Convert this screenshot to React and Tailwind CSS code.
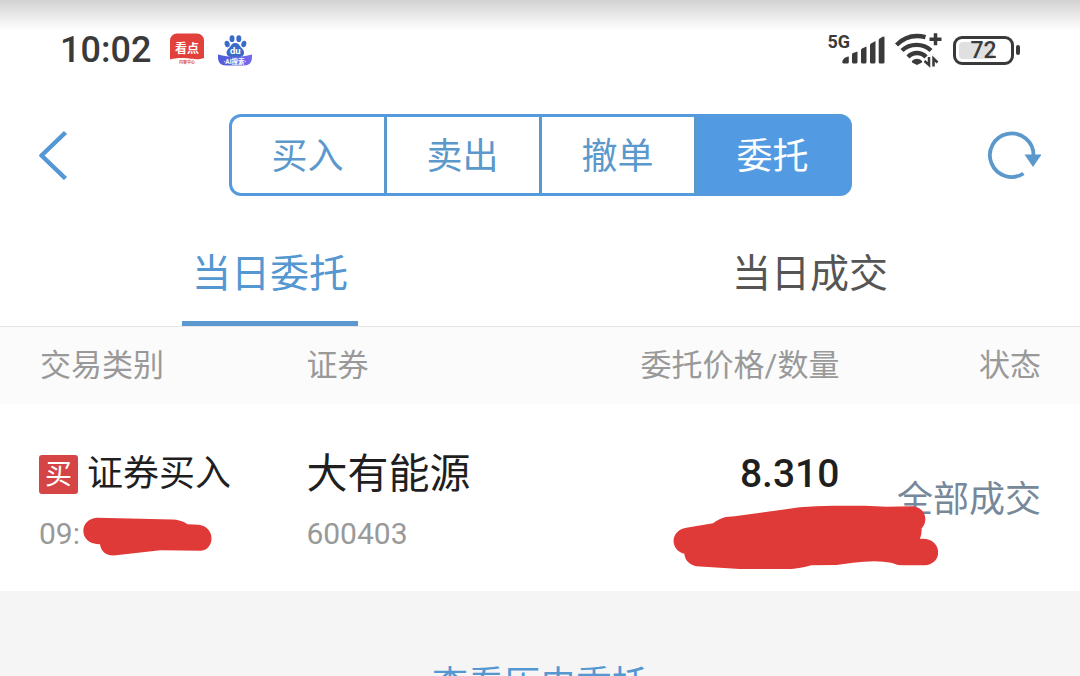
import React from "react";

function NewsBadge() {
  return (
    <svg className="h-[34px] w-[34px]" viewBox="0 0 34 34" role="img" aria-label="看点">
      <path d="M7 .5h20a7 7 0 0 1 7 7V25c-6 2.200-11 1-17 .3S5 25 0 26.500V7.500a7 7 0 0 1 7-7z" fill="#e2403a" />
      <text x="17" y="20" textAnchor="middle" fontSize="12" fontWeight="700" fill="#fff">看点</text>
      <text x="17" y="31" textAnchor="middle" fontSize="4" fontWeight="700" fill="#d9534f">内容中心</text>
    </svg>
  );
}

function PawBadge() {
  return (
    <svg className="h-[34px] w-[34px]" viewBox="0 0 34 34" role="img" aria-label="AI搜索">
      <defs>
        <linearGradient id="paw-band" x1="0" x2="1">
          <stop offset="0" stopColor="#4f5bd8" />
          <stop offset="1" stopColor="#7668ee" />
        </linearGradient>
      </defs>
      <g fill="#3a6bc9">
        <ellipse cx="9.200" cy="11" rx="2.500" ry="3.300" transform="rotate(-15 9.200 11)" />
        <ellipse cx="14" cy="5.700" rx="2.500" ry="3.400" />
        <ellipse cx="20.800" cy="5.700" rx="2.500" ry="3.400" />
        <ellipse cx="25.800" cy="11" rx="2.500" ry="3.300" transform="rotate(15 25.800 11)" />
        <path d="M17.300 10c3 0 4 2.200 5.600 4.200 2 2.200 3.600 3.500 3.100 6.200-.5 3-3 3.800-8.700 3.800s-8.200-.8-8.700-3.800c-.5-2.700 1.100-4 3.100-6.200 1.600-2 2.600-4.200 5.600-4.200z" />
      </g>
      <text x="17.300" y="21" textAnchor="middle" fontSize="9.500" fontWeight="700" fill="#fff">du</text>
      <path d="M0 21.500c6 1.800 11 2.200 17 2.200s11-.4 17-2.200v3c0 5-3 8-8 8H8c-5 0-8-3-8-8z" fill="url(#paw-band)" />
      <text x="17" y="30.500" textAnchor="middle" fontSize="6.500" fontWeight="700" fill="#fff">·AI搜索·</text>
    </svg>
  );
}

function Signal() {
  return (
    <div className="flex h-[36px] items-start" role="img" aria-label="5G">
      <span className="text-[18px] leading-[20px] font-bold text-[#3a3a3a]">5G</span>
      <svg className="-ml-2 h-[36px] w-[43px]" viewBox="15 0 43 36" fill="#3a3a3a">
        <path d="M15.300 30.500c0-3 2.500-5.500 6.500-6V30q0 1.500-1.500 1.500h-3.500q-1.500 0-1.500-1z" />
        <path d="M25 22.500q0-1 1-1.400l4.500-1.600V30q0 1.500-1.500 1.500h-2.500Q25 31.500 25 30z" />
        <path d="M34 18q0-1 1-1.500l4.500-2V30q0 1.500-1.500 1.500h-2.500Q34 31.500 34 30z" />
        <path d="M43 13q0-1 1-1.500l4.500-2.500v21q0 1.500-1.500 1.500h-2.500Q43 31.500 43 30z" />
        <path d="M51.700 8q0-1 1-1.600l3-1.700q1.800-.7 1.800 1.300v24q0 1.500-1.500 1.500h-2.800q-1.500 0-1.500-1.500z" />
      </svg>
    </div>
  );
}

function Wifi() {
  return (
    <svg className="h-[36px] w-[48px]" viewBox="0 0 48 36" role="img" aria-label="Wi-Fi">
      <g fill="none" stroke="#3a3a3a" strokeWidth="4.400">
        <path d="M1.500 13C10 4.500 20 2.500 30.500 5.200" />
        <path d="M7 18.500c8-7.500 21-7.500 29 0" />
        <path d="M13 25c5-5.300 13-5.300 18 0" />
        <path d="M34.500 7.200h12M40.500 1.200v12" strokeWidth="3.500" />
      </g>
      <path d="M17 29c3-3 7-3 10 0q.5 1-.5 1.800L22 33l-4.500-2.200Q16.500 30 17 29z" fill="#3a3a3a" />
      <path d="M34 25v8l-4.500-4M38.500 34.500v-8l4 4" fill="none" stroke="#3a3a3a" strokeWidth="2.500" />
    </svg>
  );
}

function Battery() {
  return (
    <div className="flex items-center gap-[2px]" role="img" aria-label="72%">
      <div className="flex h-[29px] w-[61px] rounded-[9px] border-[3px] border-[#3a3a3a] p-[3px]">
        <div className="flex flex-1 items-center justify-center rounded-[4px] bg-linear-to-r from-[#e0e0e0] from-70% to-white to-70% text-[23px] leading-none font-medium text-[#3a3a3a]">
          72
        </div>
      </div>
      <div className="h-[10px] w-[4px] rounded-full bg-[#3a3a3a]" />
    </div>
  );
}

function StatusBar() {
  return (
    <div className="bg-linear-to-b from-[#d2d2d2] to-white to-30%">
      <div className="flex h-[100px] items-center justify-between pr-[60px] pl-[60px]">
        <div className="flex items-center gap-[14px]">
          <span className="mr-[5px] text-[36px] leading-none font-medium text-[#3a3a3a]">10:02</span>
          <NewsBadge />
          <PawBadge />
        </div>
        <div className="flex items-center gap-[10px]">
          <Signal />
          <Wifi />
          <Battery />
        </div>
      </div>
    </div>
  );
}

const actions = ["买入", "卖出", "撤单", "委托"];

function ActionBar() {
  return (
    <nav className="mt-[14px] grid grid-cols-[1fr_auto_1fr] items-center px-[39px]">
      <button type="button" aria-label="返回" className="justify-self-start">
        <svg className="h-[50px] w-[32px]" viewBox="0 0 32 50" fill="none" stroke="#5497d5" strokeWidth="4.500">
          <path d="M26.500 2.500L2.500 25.500L26.500 48.500" strokeLinejoin="round" />
        </svg>
      </button>
      <div className="flex h-[82px] divide-x-3 divide-[#5b98cc] overflow-hidden rounded-xl border-3 border-[#549add] bg-[#529be2]">
        {actions.map((label) => (
          <button
            key={label}
            type="button"
            className={
              label === "委托"
                ? "w-[152px] bg-[#529be2] pt-1 text-[36px] leading-none text-white"
                : "w-[155px] bg-white pt-1 text-[36px] leading-none text-[#5b98cc]"
            }
          >
            {label}
          </button>
        ))}
      </div>
      <button type="button" aria-label="刷新" className="justify-self-end">
        <svg className="h-[50px] w-[54px]" viewBox="0 0 54 50">
          <path d="M36.500 43.500A21.800 21.800 0 1 1 46.500 25" fill="none" stroke="#5b98cc" strokeWidth="3.800" />
          <path d="M37.500 24.500h17L46 37z" fill="#5b98cc" />
        </svg>
      </button>
    </nav>
  );
}

function Tabs() {
  return (
    <div role="tablist" className="grid grid-cols-2 border-b border-[#e6e6e6]">
      <button
        type="button"
        role="tab"
        aria-selected="true"
        className="flex h-[130px] items-center justify-center justify-self-center border-b-5 border-[#5b98cf] px-[10px] pt-8 text-[39px] leading-none text-[#5497d1]"
      >
        当日委托
      </button>
      <button
        type="button"
        role="tab"
        aria-selected="false"
        className="flex h-[130px] items-center justify-center justify-self-center border-b-5 border-transparent px-[10px] pt-8 text-[39px] leading-none text-[#555555]"
      >
        当日成交
      </button>
    </div>
  );
}

function Scribble({ viewBox, d, className }) {
  return (
    <svg className={className} viewBox={viewBox} aria-hidden="true">
      <path d={d} fill="#e03a38" />
    </svg>
  );
}

function Orders() {
  return (
    <table className="w-full table-fixed border-collapse">
      <thead>
        <tr className="h-[77px] bg-[#fbfbfb] text-[31px] leading-none text-[#999999]">
          <th className="w-[28%] pl-10 text-left font-normal">交易类别</th>
          <th className="w-[20%] pl-1 text-left font-normal">证券</th>
          <th className="w-[30%] pr-[3px] text-right font-normal">委托价格/数量</th>
          <th className="w-[22%] pr-[39px] text-right font-normal">状态</th>
        </tr>
      </thead>
      <tbody>
        <tr className="h-[187px] bg-white">
          <td className="pl-[39px] align-top">
            <div className="mt-10 flex h-[60px] items-center gap-[9px]">
              <span className="flex size-[39px] items-center justify-center rounded-[3px] bg-[#d64545] pt-[2px] text-[27px] leading-none text-white">
                买
              </span>
              <span className="text-[36px] leading-none text-[#1f1f1f]">证券买入</span>
            </div>
            <div className="flex h-[60px] items-center gap-[3px] text-[30px] leading-none text-[#999999]">
              <span>09:</span>
              <Scribble
                className="mt-1 h-[39px] w-[129px]"
                viewBox="248 260 387 116"
                d="M290 262L515 267Q540 267 562 281L596 283C646 290 644 356 602 361L480 359L340 375C315 374 302 362 299 341C236 344 232 266 290 262Z"
              />
            </div>
          </td>
          <td className="pl-1 align-top">
            <div className="mt-10 flex h-[60px] items-center text-[41px] leading-none text-[#1f1f1f]">大有能源</div>
            <div className="flex h-[60px] items-center text-[30px] leading-none text-[#999999]">600403</div>
          </td>
          <td className="pr-[3px] align-top">
            <div className="relative z-10 mt-10">
              <div className="flex h-[60px] items-center justify-end text-[39px] leading-none font-medium text-[#1f1f1f]">
                8.310
              </div>
              <Scribble
                className="absolute top-[61px] -right-[99px] h-[64px] w-[265px]"
                viewBox="160 224 795 192"
                d="M200 292L280 279Q300 264 318 260L345 258L540 231Q590 226 640 226L735 226L800 229L880 228C916 232 928 270 906 294Q907 310 901 326C968 318 974 402 915 405L850 405Q832 405 815 397Q770 388 700 397L650 404L575 405Q540 415 515 416L360 416L230 408C208 402 196 390 194 370C150 360 150 300 200 292Z"
              />
            </div>
          </td>
          <td className="pt-1 pr-[39px] text-right align-middle text-[36px] leading-none text-[#76889a]">全部成交</td>
        </tr>
      </tbody>
    </table>
  );
}

export default function App() {
  return (
    <main className="flex h-screen flex-col overflow-hidden bg-white font-[Roboto,'Noto_Sans_CJK_SC',sans-serif]">
      <StatusBar />
      <ActionBar />
      <Tabs />
      <Orders />
      <footer className="flex-1 overflow-hidden bg-[#f5f5f5] pt-[70px] text-center">
        <a href="#history" className="text-[36px] leading-[48px] text-[#5497d1]">查看历史委托</a>
      </footer>
    </main>
  );
}
